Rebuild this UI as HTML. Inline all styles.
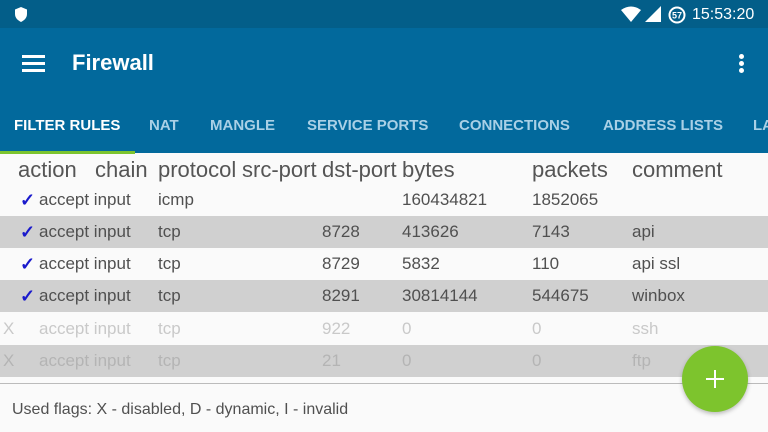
<!DOCTYPE html>
<html><head><style>
*{margin:0;padding:0;box-sizing:border-box}
body{width:768px;height:432px;overflow:hidden;background:#fafafa;font-family:"Liberation Sans",sans-serif;position:relative}
.sb{position:absolute;top:0;left:0;width:768px;height:28px;background:#035e89}
.ab{position:absolute;top:28px;left:0;width:768px;height:125px;background:#02699c}
.t{position:absolute;color:#fff}
.tab{position:absolute;top:117px;font-size:15px;font-weight:bold;color:#a9d0e6;white-space:nowrap}
.r{position:absolute;left:0;width:768px;height:32px;font-size:17px;color:#505050}
.r span{position:absolute;top:6px;white-space:nowrap}
.g{background:#d0d0d0}
.d{color:#c9c9c9}
.h{position:absolute;top:157px;font-size:22px;color:#555}
.ck{color:#1a1acc;font-weight:bold;font-size:18px}
</style></head><body>
<div class="sb"></div>
<svg style="position:absolute;left:14px;top:7px" width="14" height="15" viewBox="0 0 14 15"><path d="M7 0L13 2.5V7C13 11 10 13.5 7 15C4 13.5 1 11 1 7V2.5Z" fill="#fff"/></svg>
<svg style="position:absolute;left:621px;top:6px" width="42" height="17" viewBox="0 0 42 17"><path d="M0 4Q10-3 20 4L10 16Z" fill="#fff"/><path d="M24 16L40 0V16Z" fill="#fff"/></svg>
<svg style="position:absolute;left:668px;top:6px" width="18" height="18"><circle cx="9" cy="9" r="7.5" fill="none" stroke="#fff" stroke-width="2"/><text x="9" y="12.5" font-size="9" fill="#fff" text-anchor="middle" font-family="Liberation Sans" font-weight="bold">57</text></svg>
<div class="t" style="left:692px;top:6px;font-size:16px">15:53:20</div>
<div class="ab"></div>
<div style="position:absolute;left:22px;top:55px;width:23px;height:3px;background:#fff;box-shadow:0 7px 0 #fff,0 14px 0 #fff"></div>
<div class="t" style="left:72px;top:50px;font-size:22px;font-weight:bold">Firewall</div>
<div style="position:absolute;left:739px;top:54px;width:5px;height:5px;border-radius:50%;background:#fff;box-shadow:0 7px 0 #fff,0 14px 0 #fff"></div>
<div class="tab" style="left:14px;color:#fff">FILTER RULES</div>
<div class="tab" style="left:149px">NAT</div>
<div class="tab" style="left:210px">MANGLE</div>
<div class="tab" style="left:307px">SERVICE PORTS</div>
<div class="tab" style="left:459px">CONNECTIONS</div>
<div class="tab" style="left:603px">ADDRESS LISTS</div>
<div class="tab" style="left:753px">LA</div>
<div style="position:absolute;left:0;top:151px;width:135px;height:3px;background:#7cc42e"></div>
<div class="h" style="left:18px">action</div><div class="h" style="left:95px">chain</div><div class="h" style="left:158px">protocol</div><div class="h" style="left:242px">src-port</div><div class="h" style="left:322px">dst-port</div><div class="h" style="left:402px">bytes</div><div class="h" style="left:532px">packets</div><div class="h" style="left:632px">comment</div>
<div class="r" style="top:184px"><span class="ck" style="left:20px">✓</span><span style="left:39px">accept input</span><span style="left:158px">icmp</span><span style="left:402px">160434821</span><span style="left:532px">1852065</span></div>
<div class="r g" style="top:216px"><span class="ck" style="left:20px">✓</span><span style="left:39px">accept input</span><span style="left:158px">tcp</span><span style="left:322px">8728</span><span style="left:402px">413626</span><span style="left:532px">7143</span><span style="left:632px">api</span></div>
<div class="r" style="top:248px"><span class="ck" style="left:20px">✓</span><span style="left:39px">accept input</span><span style="left:158px">tcp</span><span style="left:322px">8729</span><span style="left:402px">5832</span><span style="left:532px">110</span><span style="left:632px">api ssl</span></div>
<div class="r g" style="top:280px"><span class="ck" style="left:20px">✓</span><span style="left:39px">accept input</span><span style="left:158px">tcp</span><span style="left:322px">8291</span><span style="left:402px">30814144</span><span style="left:532px">544675</span><span style="left:632px">winbox</span></div>
<div class="r d" style="top:313px"><span style="left:3px">X</span><span style="left:39px">accept input</span><span style="left:158px">tcp</span><span style="left:322px">922</span><span style="left:402px">0</span><span style="left:532px">0</span><span style="left:632px">ssh</span></div>
<div class="r g d" style="top:345px;color:#b4b4b4"><span style="left:3px">X</span><span style="left:39px">accept input</span><span style="left:158px">tcp</span><span style="left:322px">21</span><span style="left:402px">0</span><span style="left:532px">0</span><span style="left:632px">ftp</span></div>
<div style="position:absolute;left:0;top:383px;width:768px;height:1px;background:#bbb"></div>
<div style="position:absolute;left:12px;top:401px;font-size:16px;color:#505050">Used flags: X - disabled, D - dynamic, I - invalid</div>
<div style="position:absolute;left:682px;top:346px;width:66px;height:66px;border-radius:50%;background:#7dc42d;box-shadow:0 2px 4px rgba(0,0,0,.25)"></div>
<div style="position:absolute;left:706px;top:378px;width:18px;height:2px;background:#fff"></div>
<div style="position:absolute;left:714px;top:370px;width:2px;height:18px;background:#fff"></div>
</body></html>
